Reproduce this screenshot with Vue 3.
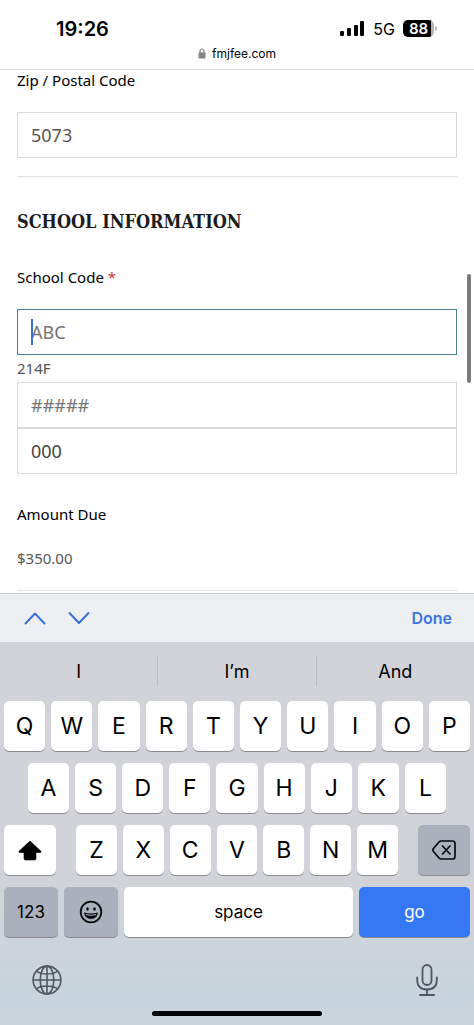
<script setup>
import { ref } from 'vue'

const zip = ref('5073')
const codePrefix = ref('')
const codeNumber = ref('')
const codeSuffix = ref('000')

const suggestions = ['I', 'I’m', 'And']
const topRow = [...'QWERTYUIOP']
const middleRow = [...'ASDFGHJKL']
const bottomRow = [...'ZXCVBNM']
</script>

<template>
  <div class="screen">
    <header class="browser">
      <div class="status">
        <time class="clock">19:26</time>
        <div class="indicators">
          <svg class="signal" viewBox="0 0 25 16" aria-hidden="true">
            <rect x="0" y="10" width="4" height="5" rx="1" />
            <rect x="7" y="7" width="4" height="8" rx="1" />
            <rect x="14" y="4" width="4" height="11" rx="1" />
            <rect x="20" y="0" width="4" height="15" rx="1" />
          </svg>
          <span class="network">5G</span>
          <span class="battery"><span class="level">88</span></span>
        </div>
      </div>
      <div class="address">
        <svg class="lock" viewBox="0 0 8 11" aria-hidden="true">
          <path d="M2 5V3a2 2 0 0 1 4 0v2" fill="none" stroke="#858585" stroke-width="1.2" />
          <rect x="0.5" y="4.5" width="7" height="6" rx="1" fill="#858585" />
        </svg>
        <span>fmjfee.com</span>
      </div>
    </header>

    <main class="form">
      <label class="label" for="zip">Zip / Postal Code</label>
      <input id="zip" v-model="zip" class="field" type="text" />
      <hr class="rule" />
      <h2 class="heading">SCHOOL INFORMATION</h2>
      <label class="label" for="prefix">School Code <span class="required">*</span></label>
      <div class="active">
        <input id="prefix" v-model="codePrefix" class="field focused" type="text" placeholder="ABC" />
        <span class="caret"></span>
      </div>
      <label class="hint" for="number">214F</label>
      <input id="number" v-model="codeNumber" class="field" type="text" placeholder="#####" />
      <input v-model="codeSuffix" class="field dark" type="text" aria-label="School code suffix" />
      <h3 class="label amount-label">Amount Due</h3>
      <p class="amount">$350.00</p>
      <hr class="rule last" />
      <span class="scroll-thumb"></span>
    </main>

    <section class="keyboard">
      <div class="accessory">
        <button type="button" class="plain" aria-label="Previous field">
          <svg width="22" height="14" viewBox="0 0 22 14"><path d="M1.5 12.5 11 2.5l9.5 10" /></svg>
        </button>
        <button type="button" class="plain" aria-label="Next field">
          <svg width="22" height="14" viewBox="0 0 22 14"><path d="M1.5 2 11 12l9.5-10" /></svg>
        </button>
        <button type="button" class="plain done">Done</button>
      </div>
      <div class="suggestions">
        <button v-for="word in suggestions" :key="word" type="button" class="plain suggestion">{{ word }}</button>
      </div>
      <div class="keys">
        <div class="row full">
          <button v-for="k in topRow" :key="k" type="button" class="key">{{ k }}</button>
        </div>
        <div class="row nine">
          <button v-for="k in middleRow" :key="k" type="button" class="key">{{ k }}</button>
        </div>
        <div class="row seven">
          <button type="button" class="key" aria-label="Shift">
            <svg width="24" height="21" viewBox="0 0 24 21">
              <path d="M12 1 23 11.3q.6 1.2-.7 1.2H18v6q0 1.5-1.5 1.5h-9Q6 20 6 18.500v-6H1.700Q.4 12.500 1 11.300Z" fill="#000" stroke="#000" stroke-width="0.6" stroke-linejoin="round" />
            </svg>
          </button>
          <div class="row letters">
            <button v-for="k in bottomRow" :key="k" type="button" class="key">{{ k }}</button>
          </div>
          <button type="button" class="key gray" aria-label="Delete">
            <svg width="24" height="20" viewBox="0 0 24 20" fill="none" stroke="#08090b" stroke-width="1.7" stroke-linecap="round" stroke-linejoin="round">
              <path d="M9 1h11.500Q23 1 23 3.500v13q0 2.500-2.500 2.500H9q-1 0-1.800-.8L1.500 11.500q-1.200-1.500 0-3L7.200 1.800Q8 1 9 1ZM10.500 6l7.500 8M18 6l-7.500 8" />
            </svg>
          </button>
        </div>
        <div class="row bottom">
          <button type="button" class="key gray word">123</button>
          <button type="button" class="key gray" aria-label="Emoji">
            <svg width="24" height="24" viewBox="0 0 24 24">
              <circle cx="12" cy="12" r="10.300" fill="none" stroke="#08090b" stroke-width="1.800" />
              <ellipse cx="8.500" cy="9" rx="1.300" ry="1.700" fill="#08090b" />
              <ellipse cx="15.500" cy="9" rx="1.300" ry="1.700" fill="#08090b" />
              <path d="M5 12.500q7 2.200 14 0-.7 6.500-7 6.500t-7-6.500Z" fill="#08090b" />
              <path d="M7 14.500q5 1.500 10 0" fill="none" stroke="#abb0bc" stroke-width="1.200" />
            </svg>
          </button>
          <button type="button" class="key word">space</button>
          <button type="button" class="key word go">go</button>
        </div>
      </div>
      <div class="tools">
        <button type="button" class="plain" aria-label="Switch keyboard">
          <svg width="30" height="30" viewBox="0 0 30 30" fill="none" stroke="#4f5661" stroke-width="1.600">
            <circle cx="15" cy="15" r="13.900" />
            <ellipse cx="15" cy="15" rx="6.800" ry="13.900" />
            <path d="M15 1v28M1 15h28M4.500 6q3.500 3 10.500 3t10.500-3M4.500 24q3.500-3 10.500-3t10.500 3" />
          </svg>
        </button>
        <button type="button" class="plain" aria-label="Dictate">
          <svg width="22" height="32" viewBox="0 0 22 32" fill="none" stroke="#4f5661" stroke-width="1.800" stroke-linecap="round">
            <rect x="6.500" y="1" width="9" height="20" rx="4.500" />
            <path d="M1.200 13.500V16q0 9.500 9.800 9.500t9.800-9.500v-2.500M11 25.500V31M4 31h14" />
          </svg>
        </button>
      </div>
      <div class="home"></div>
    </section>
  </div>
</template>

<style>
body {
  margin: 0;
  background: #fff;
}
</style>

<style scoped>
.screen {
  min-height: 100vh;
  display: flex;
  flex-direction: column;
  overflow: hidden;
  font-family: Inter, "Liberation Sans", sans-serif;
  color: #000;
}
.screen *,
.screen {
  box-sizing: border-box;
}
.browser {
  height: 70px;
  padding-top: 16px;
  border-bottom: 1px solid #dcdcdc;
}
.status {
  display: flex;
  justify-content: space-between;
  align-items: center;
  height: 25px;
  padding: 0 40px 0 56px;
}
.clock {
  font-size: 20px;
  font-weight: 600;
}
.indicators {
  display: flex;
  align-items: center;
}
.signal {
  width: 25px;
  height: 16px;
}
.network {
  margin: 0 8px;
  font-size: 16px;
  font-weight: 400;
}
.battery {
  position: relative;
  width: 31px;
  height: 17px;
  border-radius: 5px;
  background: linear-gradient(90deg, #000 28px, #b5b5b5 28px);
  color: #fff;
  text-align: center;
}
.battery::after {
  content: "";
  position: absolute;
  right: -3px;
  top: 6px;
  width: 2px;
  height: 5px;
  border-radius: 0 2px 2px 0;
  background: #b5b5b5;
}
.level {
  display: block;
  width: 31px;
  font-size: 15px;
  line-height: 17px;
  font-weight: 600;
}
.address {
  display: flex;
  justify-content: center;
  align-items: center;
  gap: 6px;
  height: 25px;
  font-size: 12px;
}
.lock {
  width: 8px;
  height: 11px;
}
.form {
  position: relative;
  display: flex;
  flex-direction: column;
  padding: 0 17px;
  font-family: "Noto Sans", "Open Sans", sans-serif;
}
.label {
  margin: 0;
  font-size: 15px;
  line-height: 20px;
  font-weight: 400;
}
.required {
  color: #d9363e;
}
.field {
  width: 100%;
  height: 46px;
  padding: 0 13px;
  border: 1px solid #d9d9d9;
  border-radius: 0;
  background: #fff;
  color: #555;
  font: 18px/24px "Noto Sans", "Open Sans", sans-serif;
  outline: none;
}
.field::placeholder {
  color: #757575;
  opacity: 1;
}
.dark {
  color: #444;
}
.label + .field,
.active {
  margin-top: 22px;
}
.active {
  position: relative;
  display: flex;
}
.focused {
  border: 1px solid #4d7f8c;
  caret-color: #3c6fd6;
}
.caret {
  position: absolute;
  left: 14px;
  top: 10px;
  width: 2px;
  height: 26px;
  background: #3c6fd6;
}
.rule {
  width: 100%;
  height: 1px;
  margin: 18px 0 0;
  border: 0;
  background: #e0e0e0;
}
.heading {
  margin: 31px 0;
  font: 700 18px/28px "DejaVu Serif Condensed", "DejaVu Serif", serif;
  color: #1c1c1c;
}
.hint {
  font-size: 15px;
  line-height: 27px;
  color: #555;
}
.amount-label {
  margin-top: 30px;
}
.amount {
  margin: 23px 0 0;
  font-size: 15px;
  line-height: 22px;
  color: #555;
}
.last {
  margin-top: 21px;
  margin-bottom: 2px;
}
.scroll-thumb {
  position: absolute;
  right: 3px;
  top: 204px;
  width: 4px;
  height: 109px;
  border-radius: 2px;
  background: #7b7b7b;
}
.keyboard {
  flex: 1;
  display: flex;
  flex-direction: column;
  background: linear-gradient(#d1d3d9 0, #d1d3d9 68%, #c8d4dd 92%, #cad5de 100%);
}
.plain {
  display: flex;
  align-items: center;
  justify-content: center;
  margin: 0;
  padding: 0;
  border: 0;
  background: none;
  color: inherit;
  font: inherit;
}
.accessory {
  display: flex;
  align-items: center;
  gap: 22px;
  height: 49px;
  padding: 0 22px 0 24px;
  border-top: 1px solid #c9cbce;
  background: #edeff2;
}
.accessory path {
  fill: none;
  stroke: #3a70dc;
  stroke-width: 2;
  stroke-linecap: round;
  stroke-linejoin: round;
}
.done {
  margin-left: auto;
  font-size: 16px;
  font-weight: 600;
  color: #3a74e0;
}
.suggestions {
  display: flex;
  height: 59px;
  padding: 14px 0 15px;
}
.suggestion {
  flex: 1;
  font-size: 18px;
}
.suggestion + .suggestion {
  border-left: 1px solid #b9bbc1;
}
.keys {
  display: grid;
  gap: 12px;
  padding: 0 4px;
}
.row {
  display: grid;
  gap: 6px;
}
.full {
  grid-template-columns: repeat(10, 1fr);
}
.nine {
  grid-template-columns: repeat(9, 1fr);
  padding: 0 24px;
}
.seven {
  grid-template-columns: 52px 1fr 52px;
  gap: 20px;
}
.letters {
  grid-template-columns: repeat(7, 1fr);
  gap: 6px;
}
.bottom {
  grid-template-columns: 54px 54px 1fr 111px;
}
.key {
  display: flex;
  align-items: center;
  justify-content: center;
  min-width: 0;
  height: 50px;
  padding: 0;
  border: 0;
  border-radius: 5px;
  background: #fff;
  box-shadow: 0 1px 0 #898b90;
  color: #000;
  font: 23px/28px Inter, "Liberation Sans", sans-serif;
}
.gray {
  background: #abb0bc;
}
.word {
  font-size: 17px;
}
.go {
  background: #3478f6;
  color: #fff;
}
.tools {
  display: flex;
  justify-content: space-between;
  align-items: center;
  height: 32px;
  margin-top: 27px;
  padding: 0 36px 0 32px;
}
.home {
  width: 36%;
  height: 5px;
  margin: 15px auto 9px;
  border-radius: 3px;
  background: #000;
}
</style>
